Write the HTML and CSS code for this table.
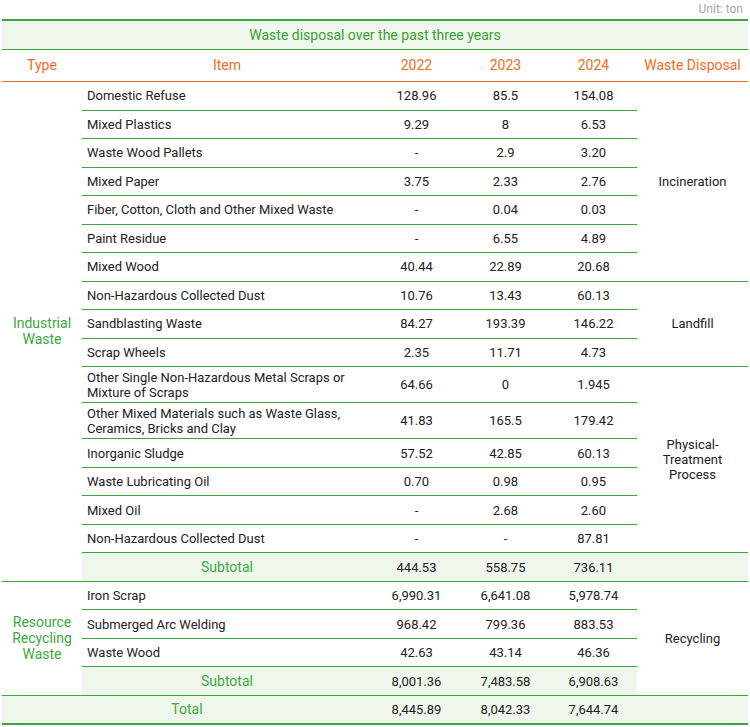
FILE: index.html
```html
<!DOCTYPE html>
<html lang="en">
<head>
<meta charset="utf-8">
<title>Waste disposal over the past three years</title>
<link rel="stylesheet" href="styles.css">
</head>
<body>
<div class="wrap">
  <div class="unit">Unit: ton</div>
  <table class="waste">
    <colgroup>
      <col class="c-type"><col class="c-item"><col class="c-y1"><col class="c-y2"><col class="c-y3"><col class="c-disp">
    </colgroup>
    <thead>
      <tr class="title"><th colspan="6">Waste disposal over the past three years</th></tr>
      <tr class="head"><th>Type</th><th>Item</th><th>2022</th><th>2023</th><th>2024</th><th>Waste Disposal</th></tr>
    </thead>
    <tbody>
      <tr><td class="type" rowspan="17">Industrial<br>Waste</td><td class="item">Domestic Refuse</td><td>128.96</td><td>85.5</td><td>154.08</td><td class="disp" rowspan="7">Incineration</td></tr>
      <tr><td class="item">Mixed Plastics</td><td>9.29</td><td>8</td><td>6.53</td></tr>
      <tr><td class="item">Waste Wood Pallets</td><td>-</td><td>2.9</td><td>3.20</td></tr>
      <tr><td class="item">Mixed Paper</td><td>3.75</td><td>2.33</td><td>2.76</td></tr>
      <tr><td class="item">Fiber, Cotton, Cloth and Other Mixed Waste</td><td>-</td><td>0.04</td><td>0.03</td></tr>
      <tr><td class="item">Paint Residue</td><td>-</td><td>6.55</td><td>4.89</td></tr>
      <tr><td class="item">Mixed Wood</td><td>40.44</td><td>22.89</td><td>20.68</td></tr>
      <tr><td class="item">Non-Hazardous Collected Dust</td><td>10.76</td><td>13.43</td><td>60.13</td><td class="disp" rowspan="3">Landfill</td></tr>
      <tr><td class="item">Sandblasting Waste</td><td>84.27</td><td>193.39</td><td>146.22</td></tr>
      <tr><td class="item">Scrap Wheels</td><td>2.35</td><td>11.71</td><td>4.73</td></tr>
      <tr class="dbl"><td class="item">Other Single Non-Hazardous Metal Scraps or Mixture of Scraps</td><td>64.66</td><td>0</td><td>1.945</td><td class="disp" rowspan="6">Physical-<br>Treatment<br>Process</td></tr>
      <tr class="dbl"><td class="item">Other Mixed Materials such as Waste Glass, Ceramics, Bricks and Clay</td><td>41.83</td><td>165.5</td><td>179.42</td></tr>
      <tr><td class="item">Inorganic Sludge</td><td>57.52</td><td>42.85</td><td>60.13</td></tr>
      <tr><td class="item">Waste Lubricating Oil</td><td>0.70</td><td>0.98</td><td>0.95</td></tr>
      <tr><td class="item">Mixed Oil</td><td>-</td><td>2.68</td><td>2.60</td></tr>
      <tr><td class="item">Non-Hazardous Collected Dust</td><td>-</td><td>-</td><td>87.81</td></tr>
      <tr class="sub"><td class="label">Subtotal</td><td>444.53</td><td>558.75</td><td>736.11</td><td></td></tr>
      <tr><td class="type" rowspan="4">Resource<br>Recycling<br>Waste</td><td class="item">Iron Scrap</td><td>6,990.31</td><td>6,641.08</td><td>5,978.74</td><td class="disp" rowspan="4">Recycling</td></tr>
      <tr><td class="item">Submerged Arc Welding</td><td>968.42</td><td>799.36</td><td>883.53</td></tr>
      <tr><td class="item">Waste Wood</td><td>42.63</td><td>43.14</td><td>46.36</td></tr>
      <tr class="sub"><td class="label">Subtotal</td><td>8,001.36</td><td>7,483.58</td><td>6,908.63</td></tr>
      <tr class="total"><td class="label" colspan="2">Total</td><td>8,445.89</td><td>8,042.33</td><td>7,644.74</td><td></td></tr>
    </tbody>
  </table>
</div>
</body>
</html>
```

FILE: styles.css
```css
html, body {
  margin: 0;
  padding: 0;
  background: #ffffff;
}

body {
  font-family: Roboto, "Liberation Sans", Arial, sans-serif;
  color: #222222;
}

.wrap {
  padding: 0 2px;
}

.unit {
  height: 19px;
  line-height: 19px;
  font-size: 12px;
  color: #a6a6a6;
  text-align: right;
  padding-right: 5px;
}

.waste {
  width: 746px;
  table-layout: fixed;
  border-collapse: collapse;
  border-top: 2px solid #3aa53a;
  border-bottom: 2px solid #3aa53a;
}

.c-type { width: 80px; }
.c-item { width: 290px; }
.c-y1 { width: 89px; }
.c-y2 { width: 89px; }
.c-y3 { width: 87px; }
.c-disp { width: 111px; }

.waste th,
.waste td {
  padding: 0 5px;
  font-weight: normal;
  text-align: center;
  vertical-align: middle;
}

.title th {
  height: 28px;
  background: #eff7ec;
  color: #3a9f36;
  font-size: 14px;
  border-bottom: 1px solid #3aa53a;
}

.head th {
  height: 30px;
  padding-bottom: 1px;
  color: #f26b1f;
  font-size: 14px;
  border-bottom: 1px solid #f26b1f;
}

.waste td {
  height: 28.5px;
  padding: 3px 5px;
  line-height: 15px;
  font-size: 13px;
  border-bottom: 1px solid #3aa53a;
  box-sizing: border-box;
}

.waste tr.dbl td {
  height: auto;
  padding: 2.6px 5px;
}

.waste td.item {
  text-align: left;
}

.waste td.type {
  color: #3caa3c;
  font-size: 14px;
  line-height: 16px;
}

.waste tr.sub td,
.waste tr.total td {
  background: #eff7ec;
}

.waste td.label {
  color: #3caa3c;
  font-size: 14px;
}

.waste tr.total td {
  border-bottom: 2px solid #3aa53a;
}
```
